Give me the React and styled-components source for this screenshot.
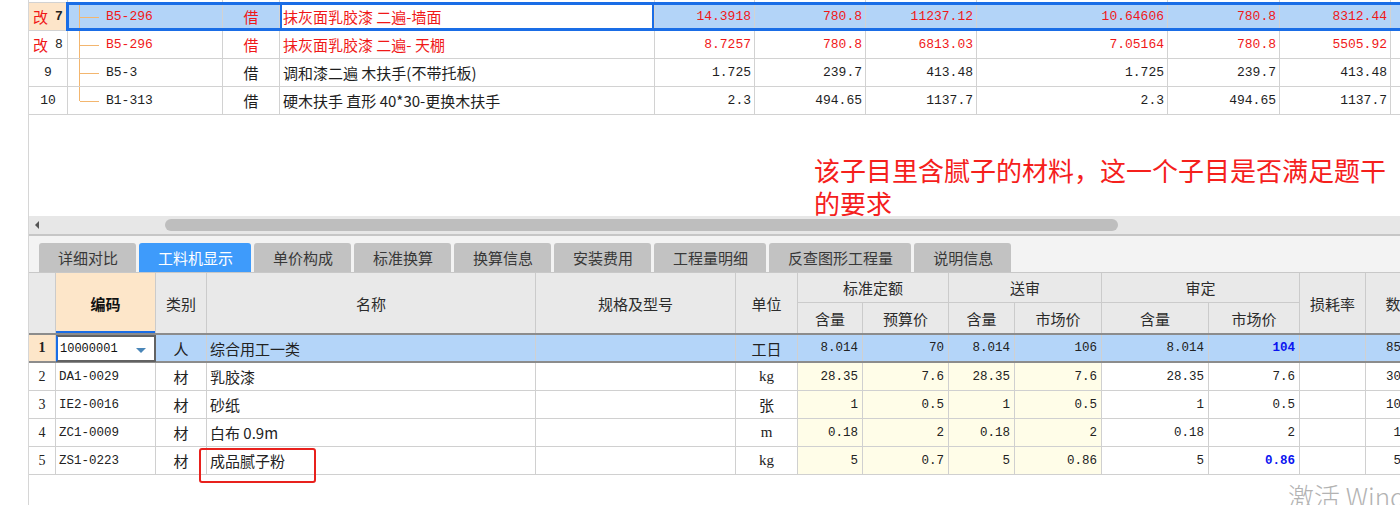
import styled, { createGlobalStyle, css } from 'styled-components';

const CJK = `"Noto Sans CJK SC", "Noto Sans", sans-serif`;
const MONO = `"Liberation Mono", "DejaVu Sans Mono", "Noto Sans CJK SC", monospace`;
const SERIF = `"Liberation Serif", "Noto Sans CJK SC", serif`;

const TOP_COLS = '39px 155px 57px 375px 100px 111px 111px 191px 112px 111px 60px';
const BOTTOM_COLS = '27px 100px 51px 329px 200px 62px 65px 86px 66px 87px 107px 91px 66px 70px';

const topRows = [
  { n: '7', mark: '改', code: 'B5-296', name: '抹灰面乳胶漆 二遍-墙面', red: true, selected: true,
    v: ['14.3918', '780.8', '11237.12', '10.64606', '780.8', '8312.44'] },
  { n: '8', mark: '改', code: 'B5-296', name: '抹灰面乳胶漆 二遍- 天棚', red: true,
    v: ['8.7257', '780.8', '6813.03', '7.05164', '780.8', '5505.92'] },
  { n: '9', code: 'B5-3', name: '调和漆二遍 木扶手(不带托板)',
    v: ['1.725', '239.7', '413.48', '1.725', '239.7', '413.48'] },
  { n: '10', code: 'B1-313', name: '硬木扶手 直形 40*30-更换木扶手', last: true,
    v: ['2.3', '494.65', '1137.7', '2.3', '494.65', '1137.7'] },
];

const tabs = ['详细对比', '工料机显示', '单价构成', '标准换算', '换算信息', '安装费用', '工程量明细', '反查图形工程量', '说明信息'];

const materials = [
  { n: 1, code: '10000001', type: '人', name: '综合用工一类', unit: '工日', selected: true,
    v: ['8.014', '70', '8.014', '106', '8.014', '104'], qty: '855.12' },
  { n: 2, code: 'DA1-0029', type: '材', name: '乳胶漆', unit: 'kg',
    v: ['28.35', '7.6', '28.35', '7.6', '28.35', '7.6'], qty: '302.81' },
  { n: 3, code: 'IE2-0016', type: '材', name: '砂纸', unit: '张',
    v: ['1', '0.5', '1', '0.5', '1', '0.5'], qty: '109.31' },
  { n: 4, code: 'ZC1-0009', type: '材', name: '白布 0.9m', unit: 'm',
    v: ['0.18', '2', '0.18', '2', '0.18', '2'], qty: '19.67' },
  { n: 5, code: 'ZS1-0223', type: '材', name: '成品腻子粉', unit: 'kg', hot: true,
    v: ['5', '0.7', '5', '0.86', '5', '0.86'], qty: '54.65' },
];

const App = () => (
  <>
    <GlobalStyle />
    <Page>
      <Panel>
        <TopArea>
          <StubRow />
          {topRows.map((r) => (
            <TopRow key={r.n}>
              <TopNum $selected={r.selected}>
                {r.mark && <Mark>{r.mark}</Mark>}
                <NumText $bold={r.selected}>{r.n}</NumText>
              </TopNum>
              <RowBody $selected={r.selected}>
                <TreeCell $red={r.red} $last={r.last}>{r.code}</TreeCell>
                <TextCell $align="center" $red={r.red}>借</TextCell>
                <TextCell $red={r.red} $editing={r.selected}>{r.name}</TextCell>
                {r.v.map((x, i) => (
                  <NumCell key={i} $red={r.red}>{x}</NumCell>
                ))}
                <NumCell />
              </RowBody>
            </TopRow>
          ))}
        </TopArea>

        <HScroll>
          <ScrollArrow />
          <ScrollThumb />
        </HScroll>

        <TabBar>
          {tabs.map((t) => (
            <Tab key={t} $active={t === '工料机显示'}>{t}</Tab>
          ))}
        </TabBar>

        <HeadGrid>
          <HeadCell $col="1" $row="1 / 3" />
          <HeadCell $col="2" $row="1 / 3" $code>编码</HeadCell>
          <HeadCell $col="3" $row="1 / 3">类别</HeadCell>
          <HeadCell $col="4" $row="1 / 3">名称</HeadCell>
          <HeadCell $col="5" $row="1 / 3">规格及型号</HeadCell>
          <HeadCell $col="6" $row="1 / 3">单位</HeadCell>
          <HeadCell $col="7 / 9" $row="1" $group>标准定额</HeadCell>
          <HeadCell $col="9 / 11" $row="1" $group>送审</HeadCell>
          <HeadCell $col="11 / 13" $row="1" $group>审定</HeadCell>
          <HeadCell $col="13" $row="1 / 3">损耗率</HeadCell>
          <HeadCell $col="14" $row="1 / 3">数量</HeadCell>
          <HeadCell $col="7" $row="2">含量</HeadCell>
          <HeadCell $col="8" $row="2">预算价</HeadCell>
          <HeadCell $col="9" $row="2">含量</HeadCell>
          <HeadCell $col="10" $row="2">市场价</HeadCell>
          <HeadCell $col="11" $row="2">含量</HeadCell>
          <HeadCell $col="12" $row="2">市场价</HeadCell>
        </HeadGrid>

        {materials.map((m) => (
          <MatRow key={m.n} $selected={m.selected}>
            <MatNum $selected={m.selected}>{m.n}</MatNum>
            {m.selected ? (
              <EditCell>
                {m.code}
                <DropArrow />
              </EditCell>
            ) : (
              <MatCell $mono>{m.code}</MatCell>
            )}
            <MatCell $align="center" $selected={m.selected}>{m.type}</MatCell>
            <MatCell $selected={m.selected}>{m.name}</MatCell>
            <MatCell $selected={m.selected} />
            <MatCell $align="center" $selected={m.selected} $unit>{m.unit}</MatCell>
            {m.v.map((x, i) => (
              <MatCell
                key={i}
                $mono
                $align="right"
                $selected={m.selected}
                $yellow={i < 4}
                $blue={i === 5 && (m.selected || m.hot)}
              >
                {x}
              </MatCell>
            ))}
            <MatCell $selected={m.selected} />
            <MatCell $mono $align="right" $selected={m.selected}>{m.qty}</MatCell>
          </MatRow>
        ))}
      </Panel>

      <Note>
        该子目里含腻子的材料，这一个子目是否满足题干
        <br />
        的要求
      </Note>
      <RedBox />
      <Watermark>激活 Windows</Watermark>
    </Page>
  </>
);

const GlobalStyle = createGlobalStyle`
  html, body {
    margin: 0;
    padding: 0;
    background: #fff;
    overflow: hidden;
  }
  body {
    font-family: ${CJK};
  }
  * {
    box-sizing: border-box;
  }
`;

const Page = styled.div`
  position: relative;
  width: 1400px;
  height: 505px;
  overflow: hidden;
  background: #fff;
`;

const Panel = styled.div`
  margin-left: 28px;
  width: 1440px;
  height: 505px;
  border-left: 1px solid #d6d6d6;
  display: flex;
  flex-direction: column;
`;

/* ---------- top list ---------- */

const TopArea = styled.div`
  height: 216px;
  overflow: hidden;
`;

const line = (x) =>
  `linear-gradient(to right, transparent ${x}px, #d2d2d2 ${x}px, #d2d2d2 ${x + 1}px, transparent ${x + 1}px)`;

const StubRow = styled.div`
  height: 3px;
  border-bottom: 1px solid #d2d2d2;
  background: ${[38, 193, 250, 625, 725, 836, 947, 1138, 1250, 1361].map(line).join(', ')};
`;

const TopRow = styled.div`
  display: grid;
  grid-template-columns: ${TOP_COLS};
  height: 28px;
  border-bottom: 1px solid #d2d2d2;
`;

const TopNum = styled.div`
  display: flex;
  align-items: center;
  justify-content: center;
  gap: 7px;
  border-right: 1px solid #d2d2d2;
  background: ${(p) => (p.$selected ? '#fde5c9' : '#fff')};
`;

const Mark = styled.span`
  font-family: ${CJK};
  font-size: 15px;
  color: #f01818;
`;

const NumText = styled.span`
  font-family: ${MONO};
  font-size: 13px;
  color: #222;
  font-weight: ${(p) => (p.$bold ? 700 : 400)};
`;

const RowBody = styled.div`
  grid-column: 2 / -1;
  display: grid;
  grid-template-columns: subgrid;
  position: relative;
  background: ${(p) => (p.$selected ? '#b3d4f8' : '#fff')};

  ${(p) =>
    p.$selected &&
    css`
      &::after {
        content: '';
        position: absolute;
        inset: -1px 0 -1px -2px;
        border: 3px solid #1a6de6;
        pointer-events: none;
      }
    `}
`;

const cellBase = css`
  display: flex;
  align-items: center;
  border-right: 1px solid #d2d2d2;
  white-space: nowrap;
  overflow: hidden;
  color: ${(p) => (p.$red ? '#f01818' : '#1e1e1e')};
`;

const TreeCell = styled.div`
  ${cellBase};
  position: relative;
  padding-left: 38px;
  font-family: ${MONO};
  font-size: 13px;

  &::before {
    content: '';
    position: absolute;
    left: 11px;
    top: 0;
    width: 1px;
    height: ${(p) => (p.$last ? '50%' : '100%')};
    background: #f3b66f;
  }

  &::after {
    content: '';
    position: absolute;
    left: 12px;
    top: 50%;
    width: 19px;
    height: 1px;
    background: #f3b66f;
  }
`;

const TextCell = styled.div`
  ${cellBase};
  justify-content: ${(p) => (p.$align === 'center' ? 'center' : 'flex-start')};
  padding-left: ${(p) => (p.$align === 'center' ? 0 : 3)}px;
  font-family: ${CJK};
  font-size: 15px;
  ${(p) =>
    p.$editing &&
    css`
      background: #fff;
      box-shadow: inset 0 0 0 2px #1a6de6;
    `}
`;

const NumCell = styled.div`
  ${cellBase};
  justify-content: flex-end;
  padding-right: 3px;
  font-family: ${MONO};
  font-size: 13px;
`;

/* ---------- scroll bar + tabs ---------- */

const HScroll = styled.div`
  flex: none;
  height: 20px;
  display: flex;
  align-items: center;
  background: #e7e7e7;
  border-bottom: 2px solid #c6c6c6;
`;

const ScrollArrow = styled.span`
  width: 0;
  height: 0;
  margin-left: 6px;
  border-top: 4px solid transparent;
  border-bottom: 4px solid transparent;
  border-right: 4px solid #555;
`;

const ScrollThumb = styled.span`
  margin-left: 126px;
  width: 953px;
  height: 12px;
  border-radius: 6px;
  background: #bebebe;
`;

const TabBar = styled.div`
  flex: none;
  height: 37px;
  display: flex;
  align-items: flex-end;
  gap: 3px;
  padding-left: 10px;
  background: #f3f3f3;
  border-bottom: 1px solid #c8c8c8;
`;

const Tab = styled.div`
  height: 29px;
  padding: 0 18px 0 19px;
  display: flex;
  align-items: center;
  border-radius: 3px 3px 0 0;
  font-family: ${CJK};
  font-size: 15px;
  color: ${(p) => (p.$active ? '#fff' : '#383838')};
  background: ${(p) => (p.$active ? '#3e9bfb' : '#c2c2c2')};
`;

/* ---------- material grid ---------- */

const HeadGrid = styled.div`
  flex: none;
  display: grid;
  grid-template-columns: ${BOTTOM_COLS};
  grid-template-rows: 30px 30px;
  background: #e9e9e9;
  border-bottom: 2px solid #8c8c8c;
`;

const HeadCell = styled.div`
  grid-column: ${(p) => p.$col};
  grid-row: ${(p) => p.$row};
  display: flex;
  align-items: center;
  justify-content: center;
  border-right: 1px solid #cbcbcb;
  border-bottom: ${(p) => (p.$group ? '1px solid #cbcbcb' : 'none')};
  font-family: ${CJK};
  font-size: 15px;
  color: #2c2c2c;
  white-space: nowrap;
  overflow: hidden;
  ${(p) =>
    p.$code &&
    css`
      background: #fde6c9;
      font-weight: 700;
      color: #111;
      box-shadow: inset 0 -2px 0 #1a6de6;
    `}
`;

const MatRow = styled.div`
  flex: none;
  display: grid;
  grid-template-columns: ${BOTTOM_COLS};
  height: 28px;
  border-bottom: ${(p) => (p.$selected ? '2px solid #8c8c8c' : '1px solid #d0d0d0')};
`;

const MatNum = styled.div`
  display: flex;
  align-items: center;
  justify-content: center;
  border-right: 1px solid #d0d0d0;
  font-family: ${SERIF};
  font-size: 14px;
  color: #222;
  font-weight: ${(p) => (p.$selected ? 700 : 400)};
  background: ${(p) => (p.$selected ? '#fde6c9' : '#fff')};
`;

const MatCell = styled.div`
  display: flex;
  align-items: center;
  justify-content: ${(p) =>
    p.$align === 'center' ? 'center' : p.$align === 'right' ? 'flex-end' : 'flex-start'};
  padding: ${(p) => (p.$align === 'right' ? '0 4px 0 0' : p.$align === 'center' ? '0' : '0 0 0 3px')};
  border-right: 1px solid #d0d0d0;
  white-space: nowrap;
  overflow: hidden;
  font-family: ${(p) => (p.$unit ? SERIF : p.$mono ? MONO : CJK)};
  font-size: ${(p) => (p.$mono ? '12.5px' : '15px')};
  color: ${(p) => (p.$blue ? '#0a14f0' : '#222')};
  font-weight: ${(p) => (p.$blue ? 700 : 400)};
  background: ${(p) => (p.$selected ? '#b4d5f9' : p.$yellow ? '#fffde8' : '#fff')};
`;

const EditCell = styled.div`
  position: relative;
  display: flex;
  align-items: center;
  padding-left: 2px;
  margin-bottom: -1px;
  border: 2px solid #626262;
  border-left-color: #1a6de6;
  background: #fff;
  font-family: ${MONO};
  font-size: 12px;
  color: #111;
`;

const DropArrow = styled.span`
  position: absolute;
  right: 8px;
  top: 11px;
  width: 0;
  height: 0;
  border-left: 5px solid transparent;
  border-right: 5px solid transparent;
  border-top: 5px solid #4a86b8;
`;

/* ---------- overlays ---------- */

const Note = styled.div`
  position: absolute;
  left: 814px;
  top: 153px;
  font-family: "Noto Sans CJK SC", sans-serif;
  font-size: 26px;
  line-height: 33px;
  color: #f5201c;
  white-space: nowrap;
`;

const RedBox = styled.div`
  position: absolute;
  left: 199px;
  top: 448px;
  width: 117px;
  height: 35px;
  border: 2px solid #e8211d;
  border-radius: 3px;
`;

const Watermark = styled.div`
  position: absolute;
  left: 1288px;
  top: 477px;
  font-family: "Noto Sans CJK SC", "Open Sans", sans-serif;
  font-weight: 300;
  font-size: 26px;
  color: #b3b3b3;
  white-space: nowrap;
`;

export default App;
